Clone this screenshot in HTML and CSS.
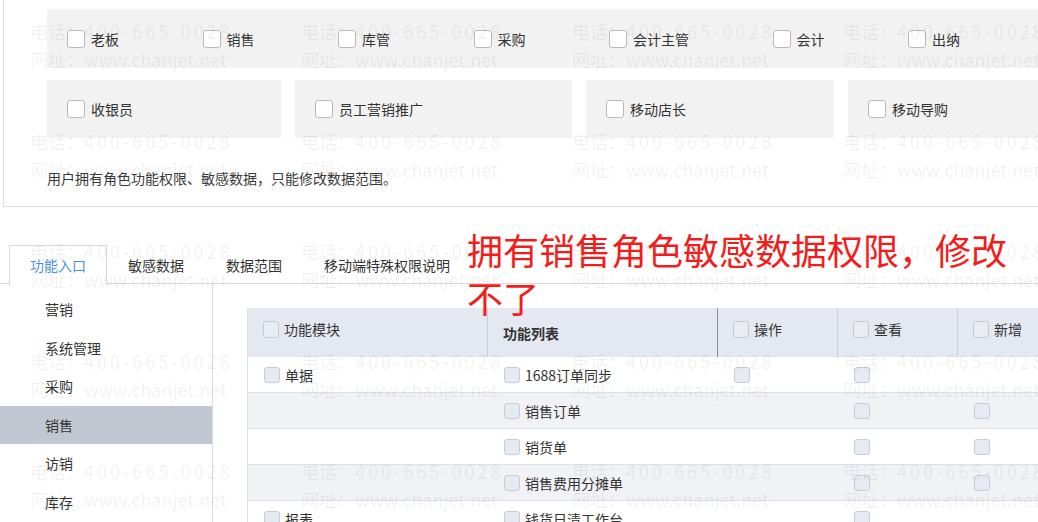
FILE: index.html
```html
<!DOCTYPE html>
<html lang="zh-CN">
<head>
<meta charset="utf-8">
<title>角色权限</title>
<link rel="stylesheet" href="styles.css">
</head>
<body>
<div class="page">
  <section class="roles">
    <div class="role-strip">
      <label class="role"><span class="cb"></span>老板</label>
      <label class="role"><span class="cb"></span>销售</label>
      <label class="role"><span class="cb"></span>库管</label>
      <label class="role"><span class="cb"></span>采购</label>
      <label class="role"><span class="cb"></span>会计主管</label>
      <label class="role"><span class="cb"></span>会计</label>
      <label class="role"><span class="cb"></span>出纳</label>
    </div>
    <div class="role-row">
      <div class="role-box b1"><label class="role"><span class="cb"></span>收银员</label></div>
      <div class="role-box b2"><label class="role"><span class="cb"></span>员工营销推广</label></div>
      <div class="role-box b3"><label class="role"><span class="cb"></span>移动店长</label></div>
      <div class="role-box b4"><label class="role"><span class="cb"></span>移动导购</label></div>
    </div>
    <p class="note">用户拥有角色功能权限、敏感数据，只能修改数据范围。</p>
  </section>

  <nav class="tabs">
    <div class="tab active">功能入口</div>
    <div class="tab">敏感数据</div>
    <div class="tab">数据范围</div>
    <div class="tab">移动端特殊权限说明</div>
  </nav>

  <div class="main">
    <ul class="side">
      <li>营销</li>
      <li>系统管理</li>
      <li>采购</li>
      <li class="sel">销售</li>
      <li>访销</li>
      <li>库存</li>
    </ul>
    <div class="content">
      <div class="grid">
        <div class="row head">
          <div class="cell hc sep"><span class="cb hcb"></span>功能模块</div>
          <div class="cell hc sep-dark title">功能列表</div>
          <div class="cell hc sep"><span class="cb hcb"></span>操作</div>
          <div class="cell hc sep"><span class="cb hcb"></span>查看</div>
          <div class="cell hc"><span class="cb hcb"></span>新增</div>
        </div>
        <div class="row">
          <div class="cell"><span class="cb bcb"></span>单据</div>
          <div class="cell"><span class="cb bcb"></span>1688订单同步</div>
          <div class="cell"><span class="cb bcb"></span></div>
          <div class="cell"><span class="cb bcb"></span></div>
          <div class="cell"></div>
        </div>
        <div class="row alt">
          <div class="cell"></div>
          <div class="cell"><span class="cb bcb"></span>销售订单</div>
          <div class="cell"></div>
          <div class="cell"><span class="cb bcb"></span></div>
          <div class="cell"><span class="cb bcb"></span></div>
        </div>
        <div class="row">
          <div class="cell"></div>
          <div class="cell"><span class="cb bcb"></span>销货单</div>
          <div class="cell"></div>
          <div class="cell"><span class="cb bcb"></span></div>
          <div class="cell"><span class="cb bcb"></span></div>
        </div>
        <div class="row alt">
          <div class="cell"></div>
          <div class="cell"><span class="cb bcb"></span>销售费用分摊单</div>
          <div class="cell"></div>
          <div class="cell"><span class="cb bcb"></span></div>
          <div class="cell"><span class="cb bcb"></span></div>
        </div>
        <div class="row">
          <div class="cell"><span class="cb bcb"></span>报表</div>
          <div class="cell"><span class="cb bcb"></span>钱货日清工作台</div>
          <div class="cell"></div>
          <div class="cell"><span class="cb bcb"></span></div>
          <div class="cell"></div>
        </div>
      </div>
    </div>
  </div>
</div>

<div class="annot">拥有销售角色敏感数据权限，修改<br>不了</div>

<div class="watermark" aria-hidden="true">
  <div class="wm"><div>电话：<span class="num">400-665-0028</span></div><div>网址：www.chanjet.net</div></div>
  <div class="wm"><div>电话：<span class="num">400-665-0028</span></div><div>网址：www.chanjet.net</div></div>
  <div class="wm"><div>电话：<span class="num">400-665-0028</span></div><div>网址：www.chanjet.net</div></div>
  <div class="wm"><div>电话：<span class="num">400-665-0028</span></div><div>网址：www.chanjet.net</div></div>
  <div class="wm"><div>电话：<span class="num">400-665-0028</span></div><div>网址：www.chanjet.net</div></div>
  <div class="wm"><div>电话：<span class="num">400-665-0028</span></div><div>网址：www.chanjet.net</div></div>
  <div class="wm"><div>电话：<span class="num">400-665-0028</span></div><div>网址：www.chanjet.net</div></div>
  <div class="wm"><div>电话：<span class="num">400-665-0028</span></div><div>网址：www.chanjet.net</div></div>
  <div class="wm"><div>电话：<span class="num">400-665-0028</span></div><div>网址：www.chanjet.net</div></div>
  <div class="wm"><div>电话：<span class="num">400-665-0028</span></div><div>网址：www.chanjet.net</div></div>
  <div class="wm"><div>电话：<span class="num">400-665-0028</span></div><div>网址：www.chanjet.net</div></div>
  <div class="wm"><div>电话：<span class="num">400-665-0028</span></div><div>网址：www.chanjet.net</div></div>
  <div class="wm"><div>电话：<span class="num">400-665-0028</span></div><div>网址：www.chanjet.net</div></div>
  <div class="wm"><div>电话：<span class="num">400-665-0028</span></div><div>网址：www.chanjet.net</div></div>
  <div class="wm"><div>电话：<span class="num">400-665-0028</span></div><div>网址：www.chanjet.net</div></div>
  <div class="wm"><div>电话：<span class="num">400-665-0028</span></div><div>网址：www.chanjet.net</div></div>
  <div class="wm"><div>电话：<span class="num">400-665-0028</span></div><div>网址：www.chanjet.net</div></div>
  <div class="wm"><div>电话：<span class="num">400-665-0028</span></div><div>网址：www.chanjet.net</div></div>
  <div class="wm"><div>电话：<span class="num">400-665-0028</span></div><div>网址：www.chanjet.net</div></div>
  <div class="wm"><div>电话：<span class="num">400-665-0028</span></div><div>网址：www.chanjet.net</div></div>
</div>
</body>
</html>
```

FILE: styles.css
```css
html, body {
  margin: 0;
  padding: 0;
  background: #fff;
}
body {
  width: 1038px;
  height: 522px;
  overflow: hidden;
  position: relative;
  font-family: "Noto Sans CJK SC", "Noto Sans", sans-serif;
  font-size: 14px;
  color: #333;
}
.page {
  width: 1038px;
  height: 522px;
  overflow: hidden;
}

/* ---------- role panel ---------- */
.roles {
  margin-left: 3px;
  width: 1035px;
  box-sizing: border-box;
  border-left: 1px solid #dcdcdc;
  border-bottom: 1px solid #dcdcdc;
  padding: 9px 0 18px 43px;
  overflow: hidden;
}
.role-strip {
  height: 59px;
  background: #f2f2f2;
  display: flex;
  align-items: center;
  gap: 83.5px;
  padding-left: 20px;
  overflow: hidden;
}
.role {
  display: flex;
  align-items: center;
  gap: 6px;
  line-height: 20px;
  white-space: nowrap;
}
.cb {
  display: inline-block;
  flex: none;
  box-sizing: border-box;
  width: 18px;
  height: 18px;
  border: 1px solid #b9b9b9;
  border-radius: 3px;
  background: #fff;
}
.role-row {
  display: flex;
  gap: 14px;
  margin-top: 12px;
}
.role-box {
  height: 58px;
  background: #f2f2f2;
  display: flex;
  align-items: center;
  padding-left: 20px;
  box-sizing: border-box;
  flex: none;
}
.b1 { width: 234px; }
.b2 { width: 277px; }
.b3 { width: 248px; }
.b4 { width: 250px; }
.note {
  margin: 30px 0 0;
  line-height: 20px;
  color: #3a3a3a;
}

/* ---------- tabs ---------- */
.tabs {
  display: flex;
  align-items: flex-start;
  margin-top: 38px;
  height: 38px;
  padding-left: 9px;
  border-bottom: 1px solid #d9d9d9;
}
.tab {
  padding: 0 20px;
  height: 38px;
  line-height: 38px;
  border: 1px solid transparent;
  border-bottom: none;
  white-space: nowrap;
  color: #333;
}
.tab.active {
  color: #4a8fe0;
  border-color: #d9d9d9;
  background: #fff;
  height: 39px;
  position: relative;
}

/* ---------- main ---------- */
.main {
  display: flex;
  height: 238px;
  overflow: hidden;
}
.side {
  list-style: none;
  margin: 0;
  padding: 6px 0 0;
  width: 212px;
  flex: none;
  border-right: 1px solid #dcdcdc;
}
.side li {
  height: 38.6px;
  line-height: 38.6px;
  padding-left: 45px;
  color: #333;
}
.side li.sel {
  background: #c1c7d0;
}
.content {
  padding: 24px 0 0 34px;
  flex: 1;
  min-width: 0;
  overflow: hidden;
}
.grid {
  width: 840px;
  border-left: 1px solid #dcdfe6;
}
.row {
  display: grid;
  grid-template-columns: 240px 230px 120px 120px 130px;
  height: 36px;
  box-sizing: border-box;
  border-bottom: 1px solid #dcdfe6;
  background: #fff;
}
.row.alt {
  background: #f0f2f6;
}
.row.head {
  height: 49px;
  border-bottom: none;
  background: #e4e8f1;
}
.cell {
  display: flex;
  align-items: center;
  gap: 5px;
  padding-left: 16px;
  box-sizing: border-box;
  white-space: nowrap;
  line-height: 20px;
  color: #333;
}
.hc {
  padding-left: 15px;
  padding-bottom: 7px;
}
.hc.title {
  padding-bottom: 0;
  font-weight: bold;
}
.sep { border-right: 1px solid #c9ced8; }
.sep-dark { border-right: 1px solid #8c9098; }
.hcb {
  width: 16px;
  height: 17px;
  border-color: #c6cad2;
  background: #e9ecf3;
}
.bcb {
  width: 16px;
  height: 16px;
  border-color: #c7ccd6;
  background: #e6eaf2;
}

/* ---------- annotation ---------- */
.annot {
  position: absolute;
  left: 467px;
  top: 225px;
  font-size: 36px;
  line-height: 48px;
  color: #f21d1a;
  z-index: 3;
  white-space: nowrap;
}

/* ---------- watermark ---------- */
.watermark {
  position: absolute;
  left: 30px;
  top: 17px;
  width: 1008px;
  height: 505px;
  overflow: hidden;
  display: grid;
  grid-template-columns: repeat(4, 271px);
  grid-auto-rows: 110px;
  pointer-events: none;
  z-index: 2;
}
.wm {
  font-size: 18px;
  line-height: 28px;
  color: rgba(0, 0, 0, 0.065);
  white-space: nowrap;
}
.wm .num {
  letter-spacing: 3px;
}
```
